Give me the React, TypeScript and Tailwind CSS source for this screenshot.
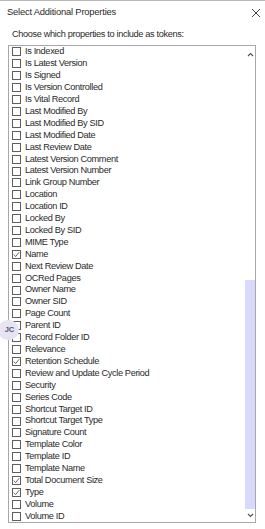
import React from "react";

const items: [string, boolean][] = [
  ["Is Indexed", false],
  ["Is Latest Version", false],
  ["Is Signed", false],
  ["Is Version Controlled", false],
  ["Is Vital Record", false],
  ["Last Modified By", false],
  ["Last Modified By SID", false],
  ["Last Modified Date", false],
  ["Last Review Date", false],
  ["Latest Version Comment", false],
  ["Latest Version Number", false],
  ["Link Group Number", false],
  ["Location", false],
  ["Location ID", false],
  ["Locked By", false],
  ["Locked By SID", false],
  ["MIME Type", false],
  ["Name", true],
  ["Next Review Date", false],
  ["OCRed Pages", false],
  ["Owner Name", false],
  ["Owner SID", false],
  ["Page Count", false],
  ["Parent ID", false],
  ["Record Folder ID", false],
  ["Relevance", false],
  ["Retention Schedule", true],
  ["Review and Update Cycle Period", false],
  ["Security", false],
  ["Series Code", false],
  ["Shortcut Target ID", false],
  ["Shortcut Target Type", false],
  ["Signature Count", false],
  ["Template Color", false],
  ["Template ID", false],
  ["Template Name", false],
  ["Total Document Size", true],
  ["Type", true],
  ["Volume", false],
  ["Volume ID", false],
];

function Box({ checked }: { checked: boolean }) {
  return (
    <div className="w-[9px] h-[9px] border border-[#5e5e5e] bg-white flex items-center justify-center shrink-0">
      {checked && (
        <svg width="7" height="7" viewBox="0 0 7 7">
          <path d="M0.8 3.6 L2.6 5.6 L6.2 1.2" fill="none" stroke="#666" strokeWidth="1" />
        </svg>
      )}
    </div>
  );
}

export default function App() {
  return (
    <div
      className="relative w-[265px] h-[529px] bg-white overflow-hidden border-t border-[#b8b8b8] text-[#2a2a2a]"
      style={{ fontFamily: '"Liberation Sans", Arial, sans-serif' }}
    >
      <div className="flex items-center justify-between h-[23px] pl-[7px] pr-[4px]">
        <span className="text-[9.4px] tracking-[-0.2px] text-[#2a2a2a]">Select Additional Properties</span>
        <svg width="10" height="10" viewBox="0 0 10 10">
          <path d="M1 1 L9 9 M9 1 L1 9" stroke="#444" strokeWidth="1" />
        </svg>
      </div>
      <div className="h-[21px] flex items-center pl-[12px] text-[9.2px] tracking-[-0.35px] text-[#2a2a2a]">
        Choose which properties to include as tokens:
      </div>
      <div className="ml-[8px] w-[248px] h-[478px] border border-[#a8a8ac] flex">
        <div className="flex-1 flex flex-col pl-[3px]">
          {items.map(([label, checked]) => (
            <div key={label} className="h-[11.92px] flex items-center">
              <Box checked={checked} />
              <span className="ml-[4px] text-[9.2px] tracking-[-0.35px] leading-none whitespace-nowrap">
                {label}
              </span>
            </div>
          ))}
        </div>
        <div className="w-[10px] flex flex-col">
          <div className="h-[17px] flex items-center justify-center">
            <svg width="7" height="5" viewBox="0 0 7 5">
              <path d="M1 4 L3.5 1.5 L6 4" fill="none" stroke="#555" strokeWidth="1.2" />
            </svg>
          </div>
          <div className="h-[217px]" />
          <div className="h-[229px] bg-[#d9d9fc]" />
          <div className="flex-1 flex items-center justify-center">
            <svg width="7" height="5" viewBox="0 0 7 5">
              <path d="M1 1 L3.5 3.5 L6 1" fill="none" stroke="#555" strokeWidth="1.2" />
            </svg>
          </div>
        </div>
      </div>
      <div className="absolute left-[-2px] top-[319px] w-[21px] h-[20px] rounded-full bg-[#e6e4f2] flex items-center justify-center">
        <span className="text-[7.5px] font-semibold text-[#55557a] pl-[2px]">JC</span>
      </div>
    </div>
  );
}
